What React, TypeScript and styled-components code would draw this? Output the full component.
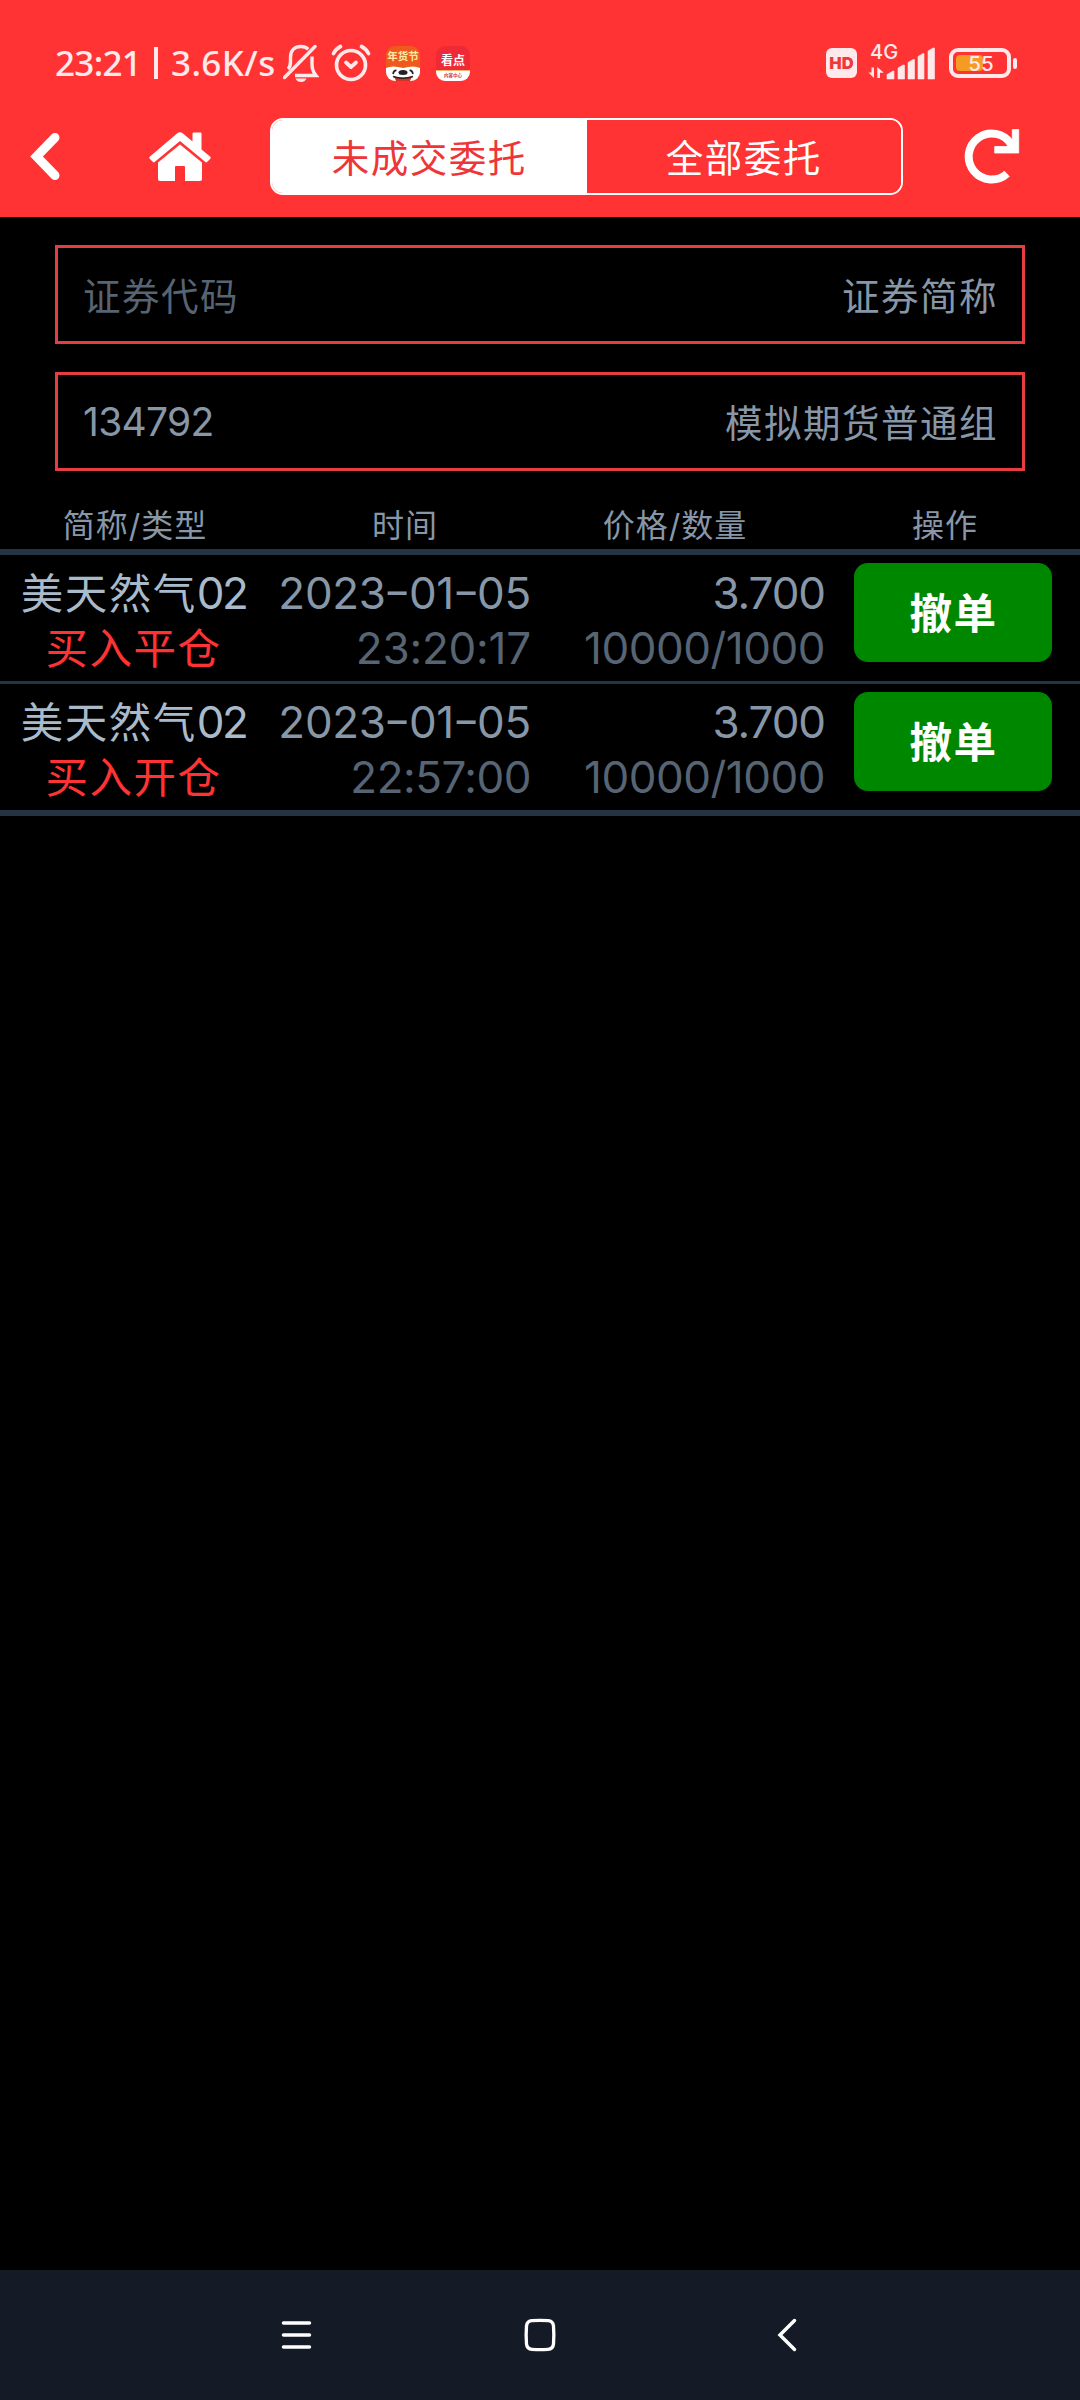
import React from "react";
import styled, { createGlobalStyle } from "styled-components";

const red = "#ff3334";
const soft = "#ffe9ea";

const GlobalStyle = createGlobalStyle`
  body { margin: 0; background: #000; }
  * { box-sizing: border-box; }
`;

const Screen = styled.div`
  width: 1080px;
  height: 2400px;
  display: flex;
  flex-direction: column;
  background: #000;
  color: #8797a7;
  font-family: Inter, "Noto Sans CJK SC", sans-serif;
  white-space: nowrap;
  overflow: hidden;
`;

const Header = styled.header`
  height: 217px;
  background: ${red};
  display: flex;
  flex-direction: column;
`;

const StatusBar = styled.div`
  height: 118px;
  padding: 8px 63px 0 55px;
  display: flex;
  align-items: center;
  color: ${soft};
`;

const Clock = styled.div`
  width: 228px;
  display: flex;
  align-items: center;
  font-family: "Noto Sans", sans-serif;
  font-size: 35px;
  font-weight: 500;
  line-height: 50px;
`;

const Time = styled.span`
  width: 99px;
  letter-spacing: -0.7px;
`;

const Divider = styled.span`
  width: 4px;
  height: 32px;
  margin-right: 13px;
  background: ${soft};
`;

const Speed = styled.span`
  letter-spacing: 0.4px;
`;

const StatusIcons = styled.div`
  display: flex;
  align-items: center;
  margin-right: auto;
`;

const AlarmSlot = styled.span`
  display: flex;
  margin-left: 12px;
`;

const AppBadge = styled.div<{ $gap: number; $base: string }>`
  width: 34px;
  height: 35px;
  margin-left: ${(p) => p.$gap}px;
  border-radius: 9px;
  overflow: hidden;
  background: ${(p) => p.$base};
  display: flex;
  flex-direction: column;
  align-items: center;
`;

const BadgeTitle = styled.span<{ $size: number; $color: string; $height: number; $pad: number }>`
  height: ${(p) => p.$height}px;
  padding-top: ${(p) => p.$pad}px;
  font-size: ${(p) => p.$size}px;
  line-height: ${(p) => p.$size + 2}px;
  font-weight: 700;
  color: ${(p) => p.$color};
`;

const BadgeFoot = styled.span`
  width: 34px;
  height: 11px;
  border-top: 1px solid #f5b56a;
  background: #fff;
  color: #d33b3b;
  font-size: 4.5px;
  font-weight: 700;
  line-height: 9px;
  text-align: center;
`;

const SignalGroup = styled.div`
  display: flex;
  align-items: center;
`;

const HdBadge = styled.span`
  width: 31px;
  height: 30px;
  border-radius: 6px;
  background: ${soft};
  color: #f0383b;
  font-size: 16.5px;
  font-weight: 900;
  line-height: 30px;
  text-align: center;
`;

const Cellular = styled.div`
  width: 68px;
  height: 36px;
  margin-left: 11px;
  margin-top: -2px;
  display: flex;
  flex-direction: column;
  position: relative;
`;

const Network = styled.span`
  position: absolute;
  left: 2px;
  top: -3px;
  font-size: 20px;
  font-weight: 500;
  line-height: 22px;
`;

const Battery = styled.div`
  width: 62px;
  height: 30px;
  margin-left: 13px;
  border: 4px solid ${soft};
  border-radius: 9px;
  padding: 3px;
  position: relative;
`;

const Charge = styled.div`
  width: 27px;
  height: 16px;
  border-radius: 4px;
  background: #f59a23;
`;

const ChargeText = styled.span`
  position: absolute;
  left: 14px;
  top: 0;
  width: 28px;
  font-size: 20.5px;
  line-height: 24px;
  font-weight: 500;
  text-align: center;
`;

const Nub = styled.div`
  width: 4px;
  height: 11px;
  margin-left: 2px;
  border-radius: 2px;
  background: ${soft};
`;

const TitleBar = styled.nav`
  height: 77px;
  display: flex;
  align-items: center;
`;

const IconButton = styled.span<{ $width: number; $pad: number }>`
  width: ${(p) => p.$width}px;
  padding-left: ${(p) => p.$pad}px;
  display: flex;
  align-items: center;
`;

const Tabs = styled.div`
  width: 633px;
  height: 77px;
  display: flex;
  border: 2px solid #fff;
  border-radius: 13px;
  overflow: hidden;
`;

const Tab = styled.div<{ $active?: boolean }>`
  flex: 1;
  display: flex;
  align-items: center;
  justify-content: center;
  padding-bottom: 2px;
  font-size: 37.5px;
  letter-spacing: 1.5px;
  background: ${(p) => (p.$active ? "#fff" : red)};
  color: ${(p) => (p.$active ? "#ee3638" : "#fff")};
`;

const Fields = styled.section`
  padding: 28px 55px 0;
  display: flex;
  flex-direction: column;
  gap: 28px;
`;

const Field = styled.div`
  height: 99px;
  border: 3px solid #e63e40;
  padding: 0 24px 3px 25px;
  display: flex;
  align-items: center;
  justify-content: space-between;
  font-size: 37.5px;
  letter-spacing: 1.5px;
`;

const Placeholder = styled.span`
  color: #566473;
`;

const Account = styled.span`
  padding-top: 3px;
  font-size: 39px;
  letter-spacing: -0.7px;
`;

const HeadRow = styled.div`
  height: 84px;
  padding-top: 31px;
  display: grid;
  grid-template-columns: repeat(4, 1fr);
  border-bottom: 6px solid #253442;
  font-size: 32px;
  line-height: 48px;
  letter-spacing: 1px;
  text-align: center;
`;

const Orders = styled.section`
  border-bottom: 6px solid #253442;
`;

const OrderRow = styled.div`
  height: 126px;
  padding: 8px 28px 0 0;
  display: grid;
  grid-template-columns: 267px 264px 294px 227px;
  font-size: 44px;
  line-height: 55px;

  & + & {
    height: 129px;
    border-top: 3px solid #253442;
  }
`;

const Cell = styled.div<{ $align: string }>`
  display: flex;
  flex-direction: column;
  align-items: ${(p) => p.$align};
  padding-top: 3px;
`;

const Name = styled.span`
  height: 55px;
  color: #a9bacb;
  font-size: 42.5px;
  letter-spacing: 1.5px;
`;

const Digits = styled.span`
  font-size: 44px;
  letter-spacing: -2.6px;
`;

const Side = styled.span`
  height: 55px;
  color: ${red};
  font-size: 42.5px;
  letter-spacing: 1.5px;
`;

const Line = styled.span<{ $dim?: boolean; $spacing: number }>`
  height: 55px;
  color: ${(p) => (p.$dim ? "#566473" : "#8797a7")};
  letter-spacing: ${(p) => p.$spacing}px;
`;

const Dash = styled.span`
  display: inline-block;
  margin: 0 1.6px;
  transform: scaleX(1.35);
  font-feature-settings: "case";
`;

const ButtonCell = styled.div`
  display: flex;
  justify-content: flex-end;
`;

const Cancel = styled.button`
  width: 198px;
  height: 99px;
  border: 0;
  border-radius: 14px;
  background: #008700;
  color: #fff;
  font: 700 42.5px/99px Inter, "Noto Sans CJK SC", sans-serif;
  letter-spacing: 1.5px;
  padding: 1px 0 0 1px;
`;

const SystemNav = styled.footer`
  height: 130px;
  margin-top: auto;
  background: #151b26;
  display: grid;
  grid-template-columns: 312px 456px 312px;
  align-items: center;
  padding-bottom: 1px;
`;

const NavSlot = styled.span<{ $align: string; $shift?: number }>`
  display: flex;
  justify-content: ${(p) => p.$align};
  padding-left: ${(p) => p.$shift ?? 0}px;
`;

const orders = [
  { side: "买入平仓", time: "23:20:17", spacing: -0.2 },
  { side: "买入开仓", time: "22:57:00", spacing: -0.5 },
];

const MutedBell = () => (
  <svg width="36" height="39" viewBox="0 0 36 39" fill="none" stroke={soft} strokeWidth="3.4">
    <path d="M5 25C8 22 7.500 19 7.500 13C7.500 6 12 2.500 18 2.500c3 0 5.500 1 7.300 2.700" />
    <path d="M29 12.500V20c0 5 1 8 4 11.500H12" />
    <path d="M1.500 33.500L32 2.500" strokeLinecap="round" />
    <path d="M12.500 34.500h11c-1 2.500-3 3.500-5.500 3.500s-4.500-1-5.500-3.500z" fill={soft} stroke="none" />
  </svg>
);

const Alarm = () => (
  <svg width="40" height="38" viewBox="0 0 40 38" fill="none" stroke={soft} strokeWidth="3.7" strokeLinecap="round" strokeLinejoin="round">
    <circle cx="20" cy="21" r="14.500" />
    <path d="M2.500 9.500c1.500-3 4-5.500 7-7M37.500 9.500c-1.500-3-4-5.500-7-7M15 18.500l5 4.500 5-4.500" />
  </svg>
);

const DogFace = () => (
  <svg width="34" height="15" viewBox="0 0 34 15">
    <path d="M0 2Q6-1 17 2Q28-1 34 2V15H0z" fill="#fff" />
    <ellipse cx="17" cy="6.500" rx="4.500" ry="2.500" fill="#222" />
    <path d="M7 8q1-4 3.500-3.500M27 8q-1-4-3.500-3.500" stroke="#222" strokeWidth="1.700" fill="none" />
    <path d="M8 10.500Q17 13 26 10.500L24 15H10z" fill="#cf3427" />
    <path d="M7 10.500q10 3.500 20 0" stroke="#222" strokeWidth="1.500" fill="none" />
  </svg>
);

const SignalBars = () => (
  <svg width="68" height="36" viewBox="0 0 68 36" fill={soft}>
    <path d="M6 23.500V34L.5 28.500H3.500V23.500zM9.300 34V23L15.800 28.800H12V34z" />
    <path d="M19 35v-4.500l6-3.500h1V35zM30 35V24l5-3h1.500V35zM40 35V18.500l5-3h1.500V35zM50 35V12.500l5-3h1V35zM60 35V7l5-3h1.500V35z" stroke={soft} strokeWidth=".6" strokeLinejoin="round" />
  </svg>
);

const BackIcon = () => (
  <svg width="30" height="49" viewBox="0 0 30 49" fill="none" stroke="#fff" strokeWidth="9" strokeLinecap="round">
    <path d="M25 5.500L6.500 24.500L25 43.500" strokeLinejoin="miter" />
  </svg>
);

const HomeIcon = () => (
  <svg width="62" height="50" viewBox="0 0 62 50" fill="#fff">
    <path d="M28 1.500q3-2.300 6 0l9.500 8V1.500q0-1 1-1h7q1 0 1 1v16L61 24.500q1.200 1 .3 2.200l-3 3q-1 1-2.200 0L31 9L5.900 29.700q-1.200 1-2.200 0l-3-3q-.9-1.200.3-2.200z" />
    <path d="M31 12.500L53 30.500V47q0 2-2 2H36V35q0-1-1-1h-8q-1 0-1 1V49H11q-2 0-2-2V30.500z" />
  </svg>
);

const RefreshIcon = () => (
  <svg width="58" height="56" viewBox="0 0 58 56" fill="none">
    <path d="M43.100 44.600A23 23 0 1 1 47 15" stroke="#fff" strokeWidth="8" />
    <path d="M48.300 .5H54.700V24H30.700V17.500H43L48.300 12z" fill="#fff" stroke="#fff" strokeWidth=".8" strokeLinejoin="round" />
  </svg>
);

export default function App() {
  return (
    <Screen>
      <GlobalStyle />
      <Header>
        <StatusBar>
          <Clock>
            <Time>23:21</Time>
            <Divider />
            <Speed>3.6K/s</Speed>
          </Clock>
          <StatusIcons>
            <MutedBell />
            <AlarmSlot>
              <Alarm />
            </AlarmSlot>
            <AppBadge $gap={15} $base="#ee5a1c">
              <BadgeTitle $size={10.5} $color="#ffe9a8" $height={20} $pad={5}>年货节</BadgeTitle>
              <DogFace />
            </AppBadge>
            <AppBadge $gap={16} $base="#ee2a37">
              <BadgeTitle $size={12} $color="#fff" $height={24} $pad={8}>看点</BadgeTitle>
              <BadgeFoot>内容中心</BadgeFoot>
            </AppBadge>
          </StatusIcons>
          <SignalGroup>
            <HdBadge>HD</HdBadge>
            <Cellular>
              <Network>4G</Network>
              <SignalBars />
            </Cellular>
            <Battery>
              <Charge />
              <ChargeText>55</ChargeText>
            </Battery>
            <Nub />
          </SignalGroup>
        </StatusBar>
        <TitleBar>
          <IconButton $width={149} $pad={30}>
            <BackIcon />
          </IconButton>
          <IconButton $width={121} $pad={0}>
            <HomeIcon />
          </IconButton>
          <Tabs>
            <Tab $active>未成交委托</Tab>
            <Tab>全部委托</Tab>
          </Tabs>
          <IconButton $width={177} $pad={61}>
            <RefreshIcon />
          </IconButton>
        </TitleBar>
      </Header>
      <Fields>
        <Field>
          <Placeholder>证券代码</Placeholder>
          <span>证券简称</span>
        </Field>
        <Field>
          <Account>134792</Account>
          <span>模拟期货普通组</span>
        </Field>
      </Fields>
      <HeadRow>
        <span>简称/类型</span>
        <span>时间</span>
        <span>价格/数量</span>
        <span>操作</span>
      </HeadRow>
      <Orders>
        {orders.map((order) => (
          <OrderRow key={order.time}>
            <Cell $align="center">
              <Name>
                美天然气<Digits>02</Digits>
              </Name>
              <Side>{order.side}</Side>
            </Cell>
            <Cell $align="flex-end">
              <Line $spacing={-0.3}>
                2023<Dash>-</Dash>01<Dash>-</Dash>05
              </Line>
              <Line $dim $spacing={order.spacing}>{order.time}</Line>
            </Cell>
            <Cell $align="flex-end">
              <Line $spacing={-1.1}>3.700</Line>
              <Line $dim $spacing={-0.5}>10000/1000</Line>
            </Cell>
            <ButtonCell>
              <Cancel>撤单</Cancel>
            </ButtonCell>
          </OrderRow>
        ))}
      </Orders>
      <SystemNav>
        <NavSlot $align="flex-end">
          <svg width="31" height="30" viewBox="0 0 31 30" stroke="#fff" strokeWidth="3.500" strokeLinecap="round">
            <path d="M2.500 3h26M2.500 15h26M2.500 27h26" />
          </svg>
        </NavSlot>
        <NavSlot $align="center">
          <svg width="32" height="34" viewBox="0 0 32 34" fill="none" stroke="#fff" strokeWidth="3.300">
            <path d="M8 2.700Q16 2.200 24 2.700Q29 3 29.500 8Q30.200 17 29.500 26Q29 31 24 31.300Q16 31.800 8 31.300Q3 31 2.500 26Q1.800 17 2.500 8Q3 3 8 2.700z" />
          </svg>
        </NavSlot>
        <NavSlot $align="flex-start" $shift={9}>
          <svg width="20" height="34" viewBox="0 0 20 34" fill="none" stroke="#fff" strokeWidth="3.500" strokeLinecap="round">
            <path d="M17.500 2.500L3 17L17.500 31.500" />
          </svg>
        </NavSlot>
      </SystemNav>
    </Screen>
  );
}
